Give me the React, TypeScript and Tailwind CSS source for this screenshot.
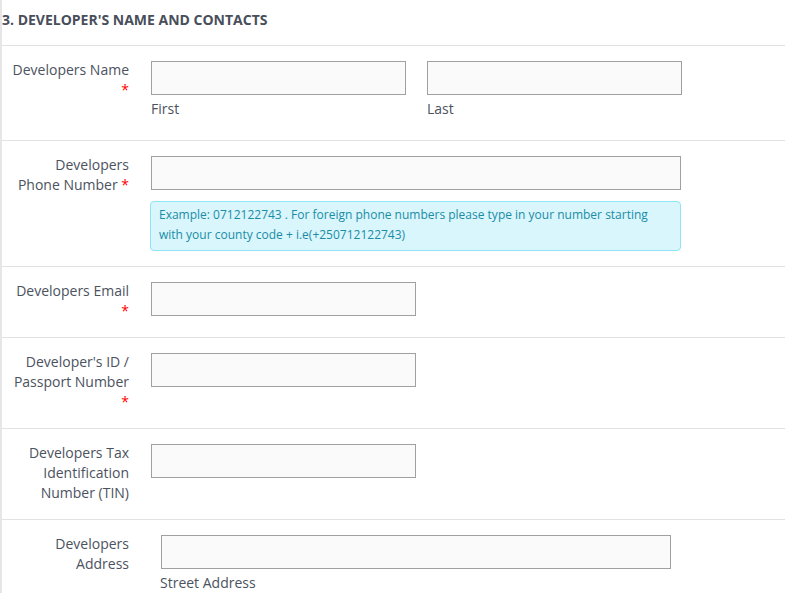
import React from "react";

const Req = () => <span className="text-[#ff0000]">*</span>;

const Input = ({ w }: { w: string }) => (
  <div className={`h-[34px] ${w} border border-[#a0a0a0] bg-[#fafafa]`} />
);

export default function App() {
  return (
    <div
      className="min-h-[593px] w-[785px] bg-white border-l-2 border-[#e6e6e6] text-[#4b5260]"
      style={{ fontFamily: '"Open Sans", "Liberation Sans", sans-serif' }}
    >
      <div className="pt-[10px] pb-[15px] border-b border-[#e2e2e2]">
        <h2 className="text-[14px] leading-5 font-bold text-[#484e5a] uppercase">
          3. Developer's Name and Contacts
        </h2>
      </div>

      {/* Name */}
      <div className="flex pt-[14px] pb-[21px] border-b border-[#e2e2e2] text-[14px] leading-5">
        <div className="w-[127px] shrink-0 text-right">
          <div>Developers Name</div>
          <div>
            <Req />
          </div>
        </div>
        <div className="ml-[22px] mt-px flex gap-[21px]">
          <div>
            <Input w="w-[255px]" />
            <div className="mt-1">First</div>
          </div>
          <div>
            <Input w="w-[255px]" />
            <div className="mt-1">Last</div>
          </div>
        </div>
      </div>

      {/* Phone */}
      <div className="flex pt-[14px] pb-[15px] border-b border-[#e2e2e2] text-[14px] leading-5">
        <div className="w-[127px] shrink-0 text-right">
          <div>Developers</div>
          <div>
            Phone Number <Req />
          </div>
        </div>
        <div className="ml-[22px] mt-px">
          <Input w="w-[530px]" />
          <div className="mt-[11px] -ml-px w-[531px] h-[50px] rounded-[4px] border border-[#8fe4f6] bg-[#d8f6fc] pl-2 pt-[3px] text-[12px] leading-5 text-[#1b8ca6]">
            Example: 0712122743 . For foreign phone numbers please type in your number starting
            <br />
            with your county code + i.e(+250712122743)
          </div>
        </div>
      </div>

      {/* Email */}
      <div className="flex pt-[14px] pb-4 border-b border-[#e2e2e2] text-[14px] leading-5">
        <div className="w-[127px] shrink-0 text-right">
          <div>Developers Email</div>
          <div>
            <Req />
          </div>
        </div>
        <div className="ml-[22px] mt-px">
          <Input w="w-[265px]" />
        </div>
      </div>

      {/* ID */}
      <div className="flex pt-[14px] pb-4 border-b border-[#e2e2e2] text-[14px] leading-5">
        <div className="w-[127px] shrink-0 text-right">
          <div>Developer's ID /</div>
          <div>Passport Number</div>
          <div>
            <Req />
          </div>
        </div>
        <div className="ml-[22px] mt-px">
          <Input w="w-[265px]" />
        </div>
      </div>

      {/* TIN */}
      <div className="flex pt-[14px] pb-4 border-b border-[#e2e2e2] text-[14px] leading-5">
        <div className="w-[127px] shrink-0 text-right">
          <div>Developers Tax</div>
          <div>Identification</div>
          <div>Number (TIN)</div>
        </div>
        <div className="ml-[22px] mt-px">
          <Input w="w-[265px]" />
        </div>
      </div>

      {/* Address */}
      <div className="flex pt-[14px] pb-4 text-[14px] leading-5">
        <div className="w-[127px] shrink-0 text-right">
          <div>Developers</div>
          <div>Address</div>
        </div>
        <div className="ml-[32px] mt-px">
          <Input w="w-[510px]" />
          <div className="mt-1 -ml-px">Street Address</div>
        </div>
      </div>
    </div>
  );
}
